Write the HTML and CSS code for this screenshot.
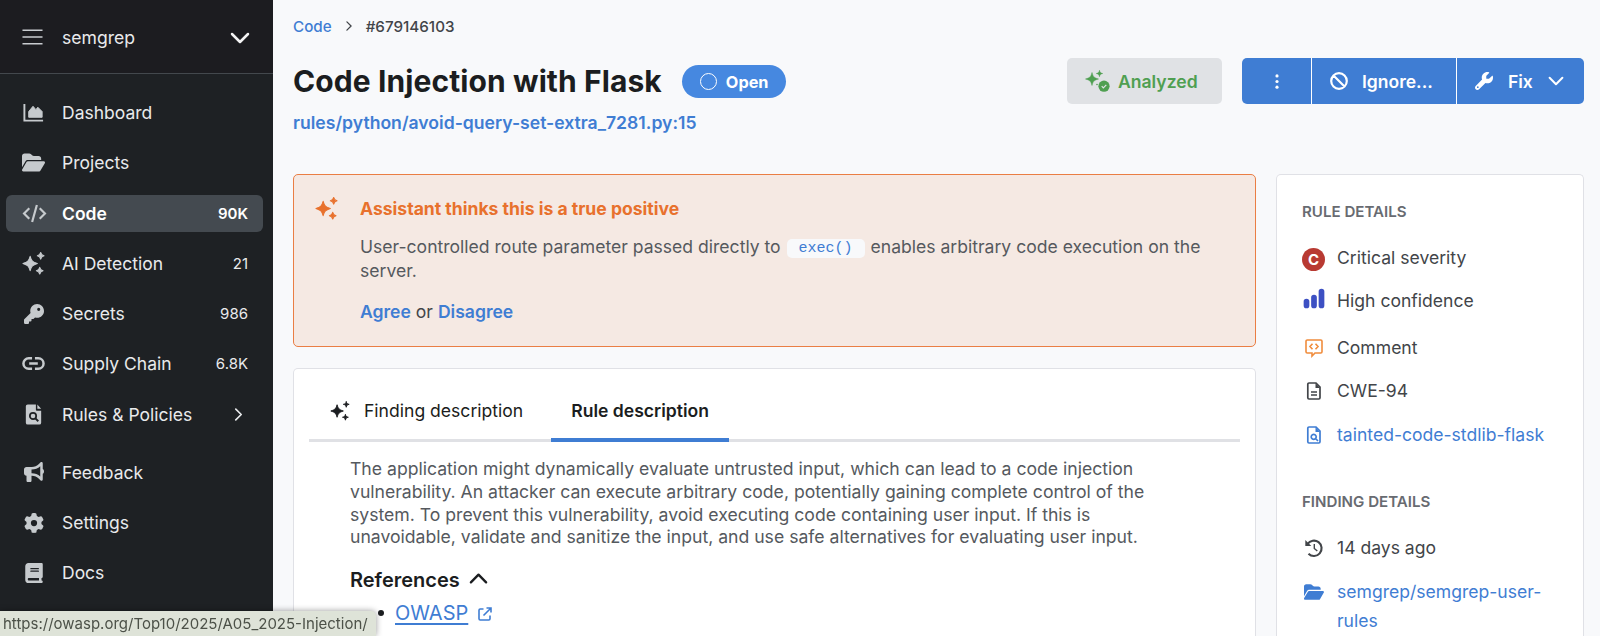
FILE: index.html
```html
<!DOCTYPE html>
<html lang="en">
<head>
  <meta charset="UTF-8">
  <title>Code Injection with Flask | semgrep</title>
  <link rel="stylesheet" href="styles.css">
</head>
<body>
  <svg class="sprite" xmlns="http://www.w3.org/2000/svg">
    <symbol id="sparkles" viewBox="0 0 24 24"><path d="M8.5 4.5C9.8 9.2 11 10.4 16 12c-5 1.6-6.2 2.8-7.5 7.5C7.200 14.800 6 13.600 1 12c5-1.600 6.200-2.800 7.500-7.500zM19.500.5c.6 2.500 1 2.900 3.500 3.500-2.500.6-2.900 1-3.500 3.500-.6-2.500-1-2.900-3.500-3.500 2.500-.6 2.900-1 3.500-3.500zM18.500 16c.6 2.500 1 2.900 3.500 3.500-2.500.6-2.900 1-3.500 3.500-.6-2.500-1-2.900-3.500-3.500 2.500-.6 2.900-1 3.500-3.500z" stroke="currentColor" stroke-width="1.100" stroke-linejoin="round"/></symbol>
    <symbol id="folder" viewBox="0 0 576 512"><path d="M88.700 223.800L0 375.800V96C0 60.700 28.700 32 64 32H181.500c17 0 33.300 6.700 45.300 18.700l26.500 26.500c12 12 28.300 18.700 45.300 18.700H416c35.300 0 64 28.700 64 64v32H144c-22.800 0-43.800 12.100-55.300 31.800zm27.600 16.100C122.100 230 132.600 224 144 224H544c11.500 0 22 6.100 27.700 16.100s5.700 22.200-.1 32.100l-112 192C453.900 474 443.400 480 432 480H32c-11.500 0-22-6.100-27.700-16.100s-5.700-22.200 .1-32.100l112-192z"/></symbol>
    <symbol id="chevron" viewBox="0 0 20 20"><path d="M2 6l8 8 8-8" fill="none" stroke="currentColor" stroke-width="2.500" stroke-linecap="round" stroke-linejoin="round"/></symbol>
    <symbol id="chevron-right" viewBox="0 0 12 12"><path d="M3.500 1l5 5-5 5" fill="none" stroke="currentColor" stroke-width="1.500" stroke-linecap="round" stroke-linejoin="round"/></symbol>
  </svg>

  <div class="app">
    <aside class="sidebar">
      <div class="org">
        <svg class="burger" viewBox="0 0 22 16"><path d="M.5 1h21M.5 8h21M.5 15h21" stroke="currentColor" stroke-width="1.500"/></svg>
        <span class="org-name">semgrep</span>
        <svg class="org-chevron"><use href="#chevron"/></svg>
      </div>
      <nav class="nav">
        <a class="nav-item">
          <svg class="nav-icon" viewBox="0 0 24 24"><path d="M2.500 3v17.500H22" fill="none" stroke="currentColor" stroke-width="2"/><path d="M7 17v-6l4.500-5.500L14.500 9l2-2.500L21 11v6z" stroke="currentColor" stroke-linejoin="round"/></svg>
          <span class="nav-label">Dashboard</span>
        </a>
        <a class="nav-item">
          <svg class="nav-icon"><use href="#folder"/></svg>
          <span class="nav-label">Projects</span>
        </a>
        <a class="nav-item active">
          <svg class="nav-icon wide" viewBox="0 0 26 20"><path d="M7.500 4.500L2 10l5.500 5.500M18.500 4.500L24 10l-5.500 5.500M15.500 1l-5 18" fill="none" stroke="currentColor" stroke-width="2.300"/></svg>
          <span class="nav-label">Code</span>
          <span class="count">90K</span>
        </a>
        <a class="nav-item">
          <svg class="nav-icon"><use href="#sparkles"/></svg>
          <span class="nav-label">AI Detection</span>
          <span class="count">21</span>
        </a>
        <a class="nav-item">
          <svg class="nav-icon key" viewBox="0 0 512 512"><path d="M336 352c97.200 0 176-78.800 176-176S433.200 0 336 0S160 78.800 160 176c0 18.700 2.900 36.800 8.300 53.700L7 391c-4.500 4.500-7 10.600-7 17v80c0 13.300 10.700 24 24 24h80c13.300 0 24-10.700 24-24V448h40c13.300 0 24-10.700 24-24V384h40c6.400 0 12.500-2.500 17-7l33.300-33.300c16.900 5.400 35 8.300 53.700 8.300zM376 96a40 40 0 1 1 0 80 40 40 0 1 1 0-80z"/></svg>
          <span class="nav-label">Secrets</span>
          <span class="count">986</span>
        </a>
        <a class="nav-item">
          <svg class="nav-icon" viewBox="0 0 24 24"><path d="M10.500 6.500H7a5.500 5.500 0 0 0 0 11h3.500M13.500 6.500H17a5.500 5.500 0 0 1 0 11h-3.500M7.500 12h9" fill="none" stroke="currentColor" stroke-width="2.600"/></svg>
          <span class="nav-label">Supply Chain</span>
          <span class="count">6.8K</span>
        </a>
        <a class="nav-item">
          <svg class="nav-icon" viewBox="0 0 24 24"><path d="M6 1.500h8.500V7a1 1 0 0 0 1 1H20v12.500a2 2 0 0 1-2 2H6a2 2 0 0 1-2-2v-17a2 2 0 0 1 2-2zM16 1.500L20 6h-4z"/><circle cx="11.500" cy="13.500" r="3.300" fill="none" stroke="#1e2124" stroke-width="1.800"/><path d="M14 16l3 3" stroke="#1e2124" stroke-width="2"/></svg>
          <span class="nav-label">Rules &amp; Policies</span>
          <svg class="nav-arrow"><use href="#chevron-right"/></svg>
        </a>
        <a class="nav-item secondary">
          <svg class="nav-icon bullhorn" viewBox="0 0 512 512"><path d="M480 32c0-12.900-7.800-24.600-19.800-29.600s-25.700-2.200-34.900 6.900L381.700 53c-48 48-113.100 75-181 75H192 160 64c-35.300 0-64 28.700-64 64v96c0 35.300 28.700 64 64 64l0 128c0 17.700 14.300 32 32 32h64c17.700 0 32-14.300 32-32V352l8.700 0c67.900 0 133 27 181 75l43.600 43.600c9.200 9.200 22.900 11.900 34.900 6.900s19.800-16.600 19.800-29.600V300.400c18.600-8.800 32-32.500 32-60.400s-13.400-51.600-32-60.400V32zm-64 76.700V240 371.300C357.200 317.800 280.500 288 200.700 288H192V192h8.700c79.800 0 156.500-29.800 215.300-83.300z"/></svg>
          <span class="nav-label">Feedback</span>
        </a>
        <a class="nav-item">
          <svg class="nav-icon gear" viewBox="0 0 512 512"><path d="M495.900 166.600c3.200 8.700 .5 18.400-6.400 24.600l-43.300 39.400c1.100 8.300 1.700 16.800 1.700 25.400s-.6 17.100-1.700 25.400l43.300 39.400c6.900 6.200 9.600 15.900 6.400 24.600c-4.400 11.900-9.700 23.300-15.800 34.300l-4.700 8.100c-6.600 11-14 21.400-22.100 31.200c-5.900 7.200-15.700 9.600-24.500 6.800l-55.700-17.700c-13.400 10.300-28.200 18.900-44 25.400l-12.500 57.100c-2 9.100-9 16.300-18.200 17.800c-13.800 2.300-28 3.500-42.500 3.500s-28.700-1.200-42.500-3.500c-9.200-1.500-16.200-8.700-18.200-17.800l-12.500-57.100c-15.800-6.500-30.600-15.100-44-25.400L83.100 425.900c-8.800 2.800-18.600 .3-24.500-6.800c-8.100-9.800-15.500-20.200-22.100-31.200l-4.700-8.100c-6.100-11-11.400-22.400-15.800-34.300c-3.200-8.700-.5-18.400 6.400-24.600l43.300-39.400C64.600 273.100 64 264.600 64 256s.6-17.100 1.700-25.400L22.400 191.200c-6.900-6.200-9.600-15.900-6.400-24.600c4.400-11.900 9.700-23.300 15.800-34.300l4.700-8.100c6.600-11 14-21.400 22.100-31.200c5.900-7.200 15.700-9.600 24.500-6.800l55.700 17.700c13.400-10.300 28.200-18.900 44-25.400l12.500-57.100c2-9.100 9-16.300 18.200-17.800C227.300 1.200 241.500 0 256 0s28.700 1.200 42.500 3.500c9.200 1.500 16.200 8.700 18.200 17.800l12.500 57.100c15.800 6.500 30.600 15.100 44 25.400l55.700-17.700c8.800-2.800 18.600-.3 24.500 6.800c8.100 9.800 15.500 20.200 22.100 31.200l4.700 8.100c6.100 11 11.400 22.400 15.800 34.300zM256 336a80 80 0 1 0 0-160 80 80 0 1 0 0 160z"/></svg>
          <span class="nav-label">Settings</span>
        </a>
        <a class="nav-item">
          <svg class="nav-icon book" viewBox="0 0 448 512"><path d="M80 0C36 0 0 36 0 80V432c0 44 36 80 80 80H384h32c17.700 0 32-14.300 32-32s-14.300-32-32-32V384c17.700 0 32-14.300 32-32V32c0-17.700-14.300-32-32-32H384 80zm16 384H352v64H96c-17.700 0-32-14.300-32-32s14.300-32 32-32zm32-240c0-8.800 7.200-16 16-16H336c8.800 0 16 7.200 16 16s-7.200 16-16 16H144c-8.800 0-16-7.200-16-16zm16 48H336c8.800 0 16 7.200 16 16s-7.200 16-16 16H144c-8.800 0-16-7.200-16-16s7.200-16 16-16z"/></svg>
          <span class="nav-label">Docs</span>
        </a>
      </nav>
    </aside>

    <main class="main">
      <div class="breadcrumb">
        <a class="crumb-link">Code</a>
        <svg class="crumb-arrow"><use href="#chevron-right"/></svg>
        <span>#679146103</span>
      </div>

      <header class="header">
        <div class="title-row">
          <h1>Code Injection with Flask</h1>
          <span class="pill"><i class="ring"></i>Open</span>
        </div>
        <div class="actions">
          <div class="analyzed">
            <svg class="analyzed-icon" viewBox="0 0 25 22"><path d="M7 2.500c1.100 4.300 2.100 5.300 6.500 6.500-4.400 1.200-5.400 2.200-6.500 6.500C5.900 11.200 4.900 10.200.5 9 4.900 7.800 5.900 6.800 7 2.500zM14.500.3c.6 2.300 1 2.700 3.200 3.200-2.200.5-2.600.9-3.200 3.200-.6-2.300-1-2.700-3.200-3.200 2.200-.5 2.600-.9 3.200-3.200z" stroke="currentColor" stroke-width=".5"/><circle cx="19" cy="16.200" r="5.600"/><circle cx="12" cy="14.500" r=".8"/><path d="M16.700 16.200l1.600 1.600 3-3" fill="none" stroke="#e0e2e5" stroke-width="1.200"/></svg>
            Analyzed
          </div>
          <div class="btn-group">
            <button class="btn more"><svg viewBox="0 0 4 16"><circle cx="2" cy="2" r="1.700"/><circle cx="2" cy="8" r="1.700"/><circle cx="2" cy="14" r="1.700"/></svg></button>
            <button class="btn ignore"><svg viewBox="0 0 18 18"><path d="M3.200 3.200l11.600 11.600M9 1.200a7.800 7.800 0 1 0 0 15.600A7.800 7.800 0 1 0 9 1.200z" fill="none" stroke="currentColor" stroke-width="2.200"/></svg>Ignore...</button>
            <button class="btn fix"><svg viewBox="0 0 512 512"><path d="M352 320c88.400 0 160-71.600 160-160c0-15.300-2.200-30.100-6.200-44.200c-3.100-10.800-16.400-13.200-24.300-5.300l-76.800 76.800c-3 3-7.100 4.700-11.300 4.700H336c-8.800 0-16-7.200-16-16V118.600c0-4.200 1.700-8.300 4.700-11.300l76.800-76.800c7.900-7.900 5.400-21.200-5.300-24.300C382.100 2.200 367.300 0 352 0C263.600 0 192 71.600 192 160c0 19.100 3.400 37.500 9.500 54.500L19.900 396.100C7.200 408.800 0 426.100 0 444.100C0 481.600 30.400 512 67.900 512c18 0 35.300-7.200 48-19.900L297.500 310.500c17 6.200 35.400 9.500 54.500 9.500zM80 408a24 24 0 1 1 0 48 24 24 0 1 1 0-48z"/></svg>Fix<svg class="fix-chevron"><use href="#chevron"/></svg></button>
          </div>
        </div>
      </header>
      <a class="file-link">rules/python/avoid-query-set-extra_7281.py:15</a>

      <div class="columns">
        <div class="left">
          <section class="assistant">
            <svg class="assistant-icon"><use href="#sparkles"/></svg>
            <div class="assistant-body">
              <h2>Assistant thinks this is a true positive</h2>
              <p>User-controlled route parameter passed directly to <code>exec()</code> enables arbitrary code execution on the server.</p>
              <div class="feedback"><a>Agree</a> or <a>Disagree</a></div>
            </div>
          </section>

          <section class="card">
            <div class="tabs">
              <div class="tab"><svg class="tab-icon"><use href="#sparkles"/></svg>Finding description</div>
              <div class="tab selected">Rule description</div>
            </div>
            <div class="description">
              <p>The application might dynamically evaluate untrusted input, which can lead to a code injection vulnerability. An attacker can execute arbitrary code, potentially gaining complete control of the system. To prevent this vulnerability, avoid executing code containing user input. If this is unavoidable, validate and sanitize the input, and use safe alternatives for evaluating user input.</p>
              <h3>References <svg class="ref-chevron"><use href="#chevron"/></svg></h3>
              <ul>
                <li><a>OWASP</a><svg class="external" viewBox="0 0 14 14"><path d="M5.500 2H2.200a1.200 1.200 0 0 0-1.200 1.200v8.600A1.200 1.200 0 0 0 2.200 13h8.600a1.200 1.200 0 0 0 1.200-1.200V8.500M8.500 1H13v4.500M13 1L5.500 8.500" fill="none" stroke="currentColor" stroke-width="1.600"/></svg></li>
              </ul>
            </div>
          </section>
        </div>

        <aside class="details">
          <h4>RULE DETAILS</h4>
          <div class="row severity"><span class="row-icon"><b class="critical">C</b></span>Critical severity</div>
          <div class="row confidence"><span class="row-icon"><svg class="bars" viewBox="0 0 22 22"><path d="M3.500 13.500v4M11 9.500v8M18.500 3.500v14" stroke="#3d50c3" stroke-width="5.700" stroke-linecap="round"/></svg></span>High confidence</div>
          <div class="row comment"><span class="row-icon"><svg viewBox="0 0 18 18"><path d="M2.200 1h13.600A1.200 1.200 0 0 1 17 2.200v10.600a1.200 1.200 0 0 1-1.200 1.200H10l-3 3v-3H2.200A1.200 1.200 0 0 1 1 12.800V2.200A1.200 1.200 0 0 1 2.200 1zM7.500 4.800L5 7.500l2.500 2.700M10.500 4.800L13 7.500l-2.500 2.700" fill="none" stroke="#f08c3c" stroke-width="1.600"/></svg></span>Comment</div>
          <div class="row"><span class="row-icon"><svg viewBox="0 0 18 18"><path d="M4 1h7l4 4v10.800A1.200 1.200 0 0 1 13.800 17H4a1.200 1.200 0 0 1-1.200-1.200V2.200A1.200 1.200 0 0 1 4 1z" fill="none" stroke="currentColor" stroke-width="1.700"/><path d="M10.500 1v5H15z"/><path d="M6 10h6M6 13h6" stroke="currentColor" stroke-width="1.300"/></svg></span>CWE-94</div>
          <div class="row link"><span class="row-icon"><svg viewBox="0 0 18 18"><path d="M4 1h7l4 4v10.800A1.200 1.200 0 0 1 13.800 17H4a1.200 1.200 0 0 1-1.200-1.200V2.200A1.200 1.200 0 0 1 4 1zM8.700 8.300a2.500 2.500 0 1 0 .01 0zM10.500 12.500l2.500 2.500" fill="none" stroke="currentColor" stroke-width="1.700"/><path d="M10.500 1v5H15z"/></svg></span>tainted-code-stdlib-flask</div>
          <h4 class="second">FINDING DETAILS</h4>
          <div class="row age"><span class="row-icon"><svg viewBox="0 0 18 18"><path d="M2.500 5A7.700 7.700 0 1 1 3.500 14.800" fill="none" stroke="currentColor" stroke-width="2.100"/><path d="M.3 1v6h6z"/><path d="M9.300 5v4.500l3 2.500" fill="none" stroke="currentColor" stroke-width="1.400"/></svg></span>14 days ago</div>
          <div class="row link"><span class="row-icon"><svg class="repo"><use href="#folder"/></svg></span><span>semgrep/semgrep-user-rules</span></div>
        </aside>
      </div>
    </main>
  </div>

  <div class="status">https://owasp.org/Top10/2025/A05_2025-Injection/</div>
</body>
</html>
```
FILE: styles.css
```css
* { box-sizing: border-box; }
body { margin: 0; height: 636px; overflow: hidden; background: #f8f9fb; color: #424549; font-family: Inter, sans-serif; font-size: 17.570px; }
h1, h2, h3, h4, p, ul { margin: 0; }
svg { fill: currentColor; flex: none; display: block; overflow: visible; }
.sprite { width: 0; height: 0; position: absolute; }
.app { display: flex; height: 636px; }

.sidebar { width: 273px; flex: none; background: #1e2124; color: #e9eaec; }
.org { height: 74px; display: flex; align-items: center; padding: 1px 23px 0 22px; background: #1c1c20; border-bottom: 1px solid #43484d; }
.burger { width: 21px; height: 16px; color: #c9ccd0; }
.org-name { margin-left: 19px; flex: 1; font-size: 17.600px; }
.org-chevron { width: 20px; height: 20px; margin-top: 1px; color: #f4f4f5; }
.nav { padding: 20px 10px 0 6px; }
.nav-item { display: flex; align-items: center; height: 37px; margin-bottom: 13.300px; padding: 0 15px 0 16px; border-radius: 6px; font-size: 17.500px; }
.nav-item.secondary { margin-top: 21px; }
.nav-item.active { background: #444a50; color: #fff; font-weight: 600; }
.nav-icon { width: 23px; height: 23px; color: #c6cacd; }
.nav-icon.wide { width: 25px; height: 19px; margin-right: -2px; }
.nav-icon.key, .nav-icon.bullhorn, .nav-icon.gear, .nav-icon.book { width: 20px; height: 20px; margin: 0 1px 0 2px; }
.nav-label { margin-left: 17px; flex: 1; }
.count { font-size: 15px; }
.nav-arrow { width: 13px; height: 13px; margin-right: 3px; }

.main { flex: 1; min-width: 0; display: flex; flex-direction: column; padding: 0 16px 0 20px; }
.breadcrumb { display: flex; align-items: center; height: 20px; margin-top: 16px; font-size: 15.200px; font-weight: 500; }
.crumb-link { color: #3f7dd3; }
.crumb-arrow { width: 10px; height: 10px; margin: 0 12px; }
.header { display: flex; justify-content: space-between; height: 46px; margin-top: 22px; }
.title-row { display: flex; align-items: center; padding-top: 1px; }
h1 { font-size: 30px; line-height: 45px; font-weight: 700; color: #1b1d20; letter-spacing: .1px; }
.pill { display: flex; align-items: center; width: 104px; height: 33px; margin-left: 20px; padding-left: 18px; border-radius: 17px; background: #4688e0; color: #fff; font-size: 16.300px; font-weight: 700; }
.ring { width: 17px; height: 17px; margin-right: 9px; border: 1.500px solid #fff; border-radius: 50%; }
.actions { display: flex; gap: 20px; }
.analyzed { display: flex; align-items: center; width: 155px; padding-left: 18px; gap: 8px; border-radius: 5px; background: #e0e2e5; color: #4f9f51; font-weight: 600; }
.analyzed-icon { width: 25px; height: 22px; }
.btn-group { display: flex; border-radius: 5px; overflow: hidden; }
.btn { display: flex; align-items: center; border: 0; padding: 0; background: #3f7dd3; color: #fff; font: 600 17.500px Inter, sans-serif; }
.btn + .btn { border-left: 1px solid #fff; }
.more { width: 69px; justify-content: center; }
.more svg { width: 4px; height: 15px; }
.ignore { width: 145px; padding-left: 18px; gap: 14px; }
.ignore svg { width: 18px; height: 18px; }
.fix { width: 128px; padding-left: 18px; gap: 15px; }
.fix svg { width: 18px; height: 18px; }
.fix .fix-chevron { width: 16px; height: 16px; }
.file-link { height: 24px; margin-top: 7px; line-height: 24px; color: #3f7dd3; font-size: 17.600px; font-weight: 600; }

.columns { flex: 1; min-height: 0; display: flex; gap: 20px; margin-top: 39px; }
.left { width: 963px; flex: none; display: flex; flex-direction: column; }
.assistant { display: flex; height: 173px; padding: 22px 20px 0 21px; border: 1px solid #ea7e44; border-radius: 5px; background: #f5e9e3; }
.assistant-icon { width: 23px; height: 23px; color: #e8712d; }
.assistant-body { margin-left: 22px; }
h2 { font-size: 17.560px; line-height: 24px; font-weight: 700; color: #e8712d; }
.assistant p { margin-top: 14px; line-height: 24px; color: #55595e; }
code { padding: 1px 12px; margin: 0 1px; border-radius: 5px; background: #f8f9fb; color: #3f7dd3; font-family: "Liberation Mono", monospace; font-size: 15px; line-height: 17px; vertical-align: 1px; }
.feedback { margin-top: 17px; line-height: 24px; }
.feedback a { color: #3f7dd3; font-weight: 600; }

.card { flex: 1; margin-top: 21px; padding: 0 15px; border: 1px solid #e0e1e6; border-bottom: 0; border-radius: 5px 5px 0 0; background: #fff; }
.tabs { display: flex; height: 73px; border-bottom: 3px solid #e0e1e5; color: #1b1d20; }
.tab { display: flex; align-items: center; height: 73px; padding: 10px 28px 0 21px; }
.tab-icon { width: 20px; height: 20px; margin-right: 14px; }
.tab.selected { padding: 13px 20px 0; border-bottom: 4px solid #3f7dd3; font-weight: 600; }
.description { padding: 16px 90px 0 41px; color: #55595e; }
.description p { font-size: 17.610px; line-height: 22.800px; }
h3 { display: flex; align-items: center; gap: 9px; margin-top: 18px; font-size: 20px; line-height: 26px; font-weight: 600; color: #1b1d20; }
.ref-chevron { width: 19px; height: 19px; margin-bottom: 3px; transform: rotate(180deg); }
.description ul { padding-left: 28px; margin-top: 6px; list-style: none; font-size: 20px; line-height: 28px; }
li { display: flex; align-items: center; }
li::before { content: ""; width: 6px; height: 6px; margin-right: 11px; border-radius: 50%; background: #1b1d20; }
li a { color: #3f7dd3; text-decoration: underline; text-underline-offset: 3px; }
.external { width: 14px; height: 14px; margin: 1px 0 0 10px; color: #3f7dd3; }

.details { width: 308px; padding: 27px 20px 0 25px; border: 1px solid #e0e1e6; border-bottom: 0; border-radius: 5px 5px 0 0; background: #fff; }
h4 { font-size: 15.100px; line-height: 20px; font-weight: 600; color: #686b71; }
h4.second { margin-top: 42.500px; }
.row { display: flex; margin-top: 15px; line-height: 28.600px; }
.row.severity { margin-top: 22px; }
.row.confidence { margin-top: 14.500px; }
.row.comment { margin-top: 18px; }
.row.age { margin-top: 22.500px; }
.row-icon { display: flex; align-items: center; justify-content: center; width: 23px; height: 28px; margin-right: 12px; flex: none; }
.row-icon svg { width: 18px; height: 18px; }
.row-icon .repo { width: 20px; height: 18px; }
.row-icon .bars { width: 22px; height: 22px; margin-bottom: 4px; }
.critical { width: 23px; height: 23px; margin-top: 2px; border-radius: 50%; background: #b83a32; color: #fff; font-size: 15px; line-height: 23px; text-align: center; }
.link { color: #3f7dd3; }

/* browser status bar with the hovered link */
.status { position: fixed; left: 0; bottom: 0; width: 376px; height: 25px; padding-left: 3px; line-height: 26px; font-size: 15px; color: #4c5148; background: #dee3d8; border-top-right-radius: 5px; box-shadow: 0 0 6px rgba(0,0,0,0.4); }
```
